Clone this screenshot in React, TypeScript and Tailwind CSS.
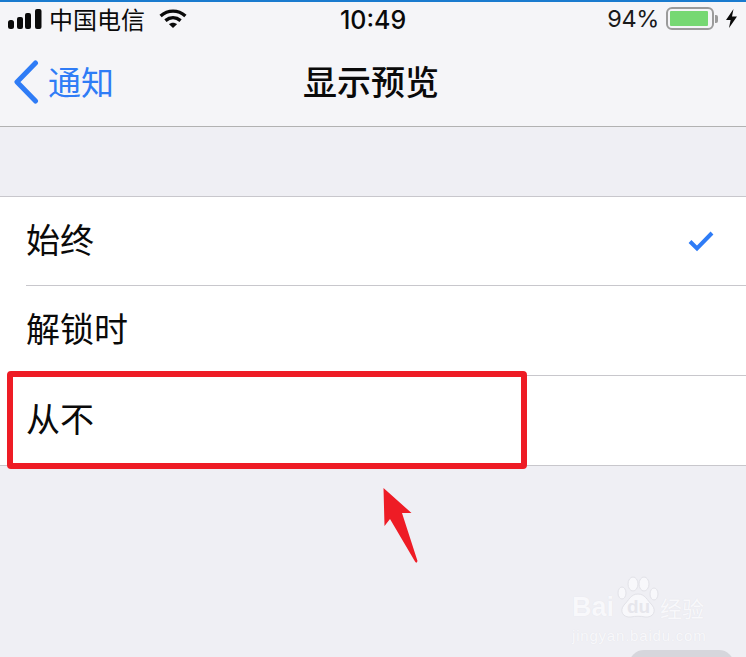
const cjk = "font-['Inter','Noto_Sans_CJK_SC',sans-serif]";

function Row({ label, check, height, indent = true }: { label: string; check?: boolean; height: string; indent?: boolean }) {
  return (
    <div className="pl-[26px]">
      <div className={`${height} flex items-center justify-between pr-[31px] ${indent ? "border-b border-[#c8c7cc]" : ""}`}>
        <span className="mt-[-5px] text-[34px] leading-none text-[#0a0a0a] font-['Noto_Sans_CJK_SC',sans-serif]">{label}</span>
        {check && (
          <svg width="28" height="22" viewBox="0 0 28 22" fill="none" className="mt-[-1px]">
            <path d="M3 11.5 L10 18.5 L25 3" stroke="#2f7cf6" strokeWidth="4" />
          </svg>
        )}
      </div>
    </div>
  );
}

export default function App() {
  return (
    <div className={`relative w-[746px] h-[657px] overflow-hidden bg-[#efeff4] ${cjk}`}>
      <header className="h-[127px] bg-[#f5f5f8] border-t-2 border-b border-t-[#1a7bcf] border-b-[#b2b2b2] flex flex-col">
        <div className="h-[33px] px-[8px] grid grid-cols-[1fr_auto_1fr] items-center text-[#0a0a0a]">
          <div className="flex items-center">
            <svg width="34" height="20" viewBox="0 0 34 20" fill="#0a0a0a" className="mr-[8px]">
              <rect x="0" y="11" width="6" height="9" rx="2.5" />
              <rect x="9" y="8" width="6" height="12" rx="2" />
              <rect x="17" y="4" width="6" height="16" rx="2" />
              <rect x="27" y="0" width="6.5" height="20" rx="2" />
            </svg>
            <span className="ml-[-1px] text-[24px] leading-none font-['Noto_Sans_CJK_SC',sans-serif]">中国电信</span>
            <svg width="28" height="20" viewBox="0 0 28 20" fill="none" stroke="#0a0a0a" strokeWidth="3.4" className="ml-[14px]">
              <path d="M1.6 7 C9 0.5 19 0.5 26.4 7" />
              <path d="M6.4 11.6 C11 7.8 17 7.8 21.6 11.6" />
              <path d="M10 15.2 L14 19 L18 15.2 C15.6 13.2 12.4 13.2 10 15.2 Z" fill="#0a0a0a" stroke="none" />
            </svg>
          </div>
          <span className="mt-[3px] text-[25px] leading-[30px] font-medium font-['Inter',sans-serif]">10:49</span>
          <div className="flex items-center justify-end">
            <span className="mt-[1px] text-[23.5px] leading-none font-['Inter',sans-serif] tracking-[-0.4px] text-[#1a1a1a]">94%</span>
            <div className="ml-[7px] w-[48px] h-[23px] rounded-[6px] border-[2px] border-[#9b9b9b] p-[2px]">
              <div className="w-[38px] h-full bg-[#76d873] rounded-[1px]" />
            </div>
            <div className="w-[3px] h-[8px] ml-[1px] bg-[#9b9b9b] rounded-r-[2px]" />
            <svg width="11" height="19" viewBox="0 0 11 19" fill="#0a0a0a" className="ml-[8px] mr-[1px]">
              <path d="M7.5 0 L0 11 H4.6 L3 19 L11 7.4 H6 Z" />
            </svg>
          </div>
        </div>
        <div className="flex-1 pl-[13px] pr-[17px] pt-[3px] grid grid-cols-[1fr_auto_1fr] items-center">
          <div className="flex items-center">
            <svg width="26" height="44" viewBox="0 0 26 44" fill="none">
              <path d="M22.5 3 L4 22 L22.5 41" stroke="#2f7cf6" strokeWidth="5" strokeLinecap="round" strokeLinejoin="round" />
            </svg>
            <span className="ml-[9px] mt-[-2px] text-[33px] leading-none text-[#2f7cf6] font-['Noto_Sans_CJK_SC',sans-serif]">通知</span>
          </div>
          <h1 className="mt-[-3px] text-[34px] leading-none font-medium text-[#0a0a0a] font-['Noto_Sans_CJK_SC',sans-serif]">显示预览</h1>
          <div />
        </div>
      </header>

      <section className="mt-[69px] bg-white border-t border-b border-[#c8c7cc]">
        <Row label="始终" check height="h-[89px]" />
        <Row label="解锁时" height="h-[90px]" />
        <Row label="从不" height="h-[89px]" indent={false} />
      </section>

      {/* red annotation */}
      <div className="absolute left-[7px] top-[371px] w-[520px] h-[98px] border-[6px] border-[#ee1c25] rounded-[4px]" />
      <svg className="absolute left-[380px] top-[485px]" width="42" height="82" viewBox="0 0 42 82">
        <path d="M3.5 3 L31.5 28 L22 28 L37.5 76 Q36.5 79 35 76.5 L10 34 L4.5 41 Z" fill="#ee1c25" />
      </svg>

      {/* watermark */}
      <div className="absolute left-[572px] top-[576px] w-[140px]">
        <div className="relative h-[50px]">
          <span className="absolute left-0 top-[17px] text-[27px] leading-[28px] font-bold font-['Liberation_Sans',sans-serif] text-[#f8f8fb] [text-shadow:0_0_1px_#e0e0e6]">Bai</span>
          <svg className="absolute left-[45px] top-0" width="42" height="44" viewBox="0 0 42 44" fill="#f8f8fb" stroke="#e2e2e8" strokeWidth="1">
            <ellipse cx="5" cy="17" rx="4" ry="6" />
            <ellipse cx="16" cy="8" rx="5" ry="7" />
            <ellipse cx="27" cy="8" rx="5" ry="7" />
            <ellipse cx="37" cy="18" rx="4" ry="6" />
            <path d="M21 18 C14 18 12 24 7 29 C2 35 6 42 14 41 C18 40 24 40 28 41 C36 42 40 35 35 29 C30 24 28 18 21 18 Z" />
          </svg>
          <span className="absolute left-[55px] top-[21px] text-[19px] leading-[20px] font-bold font-['Liberation_Sans',sans-serif] text-[#e6e6ec]">du</span>
          <span className="absolute left-[88px] top-[19px] text-[22px] leading-[24px] font-['Noto_Sans_CJK_SC',sans-serif] text-[#f8f8fb] [text-shadow:0_0_1px_#e0e0e6]">经验</span>
        </div>
        <div className="mt-[1px] text-[15px] leading-[18px] tracking-[0.8px] font-['Liberation_Sans',sans-serif] text-[#f8f8fb] [text-shadow:0_0_1px_#e0e0e6]">jingyan.baidu.com</div>
      </div>

      {/* bottom pill */}
      <div className="absolute left-[629px] top-[650px] w-[105px] h-[30px] rounded-[20px] bg-[#d6d6dc]" />
    </div>
  );
}
